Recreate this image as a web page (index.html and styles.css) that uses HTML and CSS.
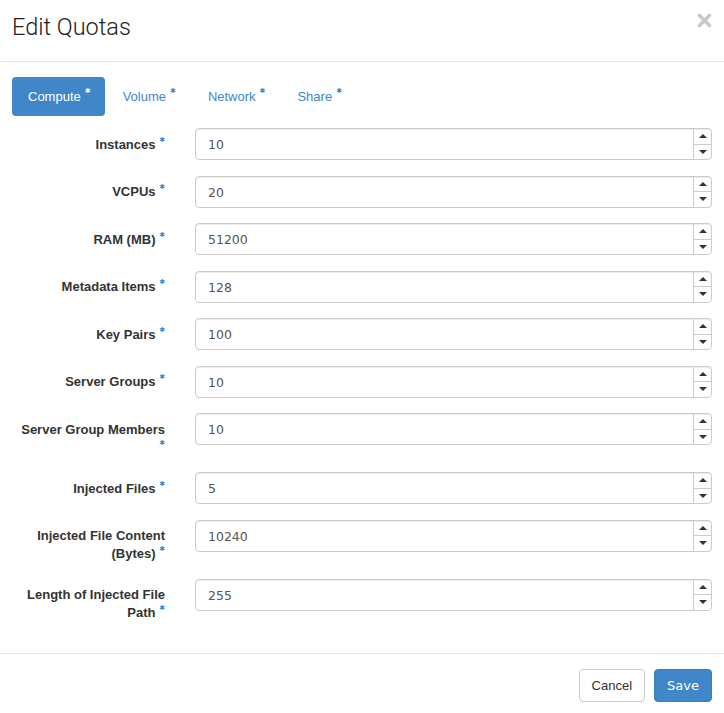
FILE: index.html
```html
<!DOCTYPE html>
<html>
<head>
<meta charset="utf-8">
<link rel="stylesheet" href="styles.css">
</head>
<body>
<div class="modal">
  <div class="modal-header">
    <h3 class="title">Edit Quotas</h3>
    <svg class="close" width="15" height="15" viewBox="0 0 15 15"><path d="M2.5 2.5 L12.5 12.5 M12.5 2.5 L2.5 12.5" stroke="#c9c9c9" stroke-width="3.6" stroke-linecap="round"/></svg>
  </div>
  <div class="modal-body">
    <ul class="tabs">
      <li class="tab active">Compute</li>
      <li class="tab">Volume</li>
      <li class="tab">Network</li>
      <li class="tab">Share</li>
    </ul>
    <form class="form">
      <div class="row"><label class="lbl">Instances <span class="req">&#x2731;</span></label><div class="num"><span class="val">10</span><span class="spin"><span class="up"></span><span class="down"></span></span></div></div>
      <div class="row"><label class="lbl">VCPUs <span class="req">&#x2731;</span></label><div class="num"><span class="val">20</span><span class="spin"><span class="up"></span><span class="down"></span></span></div></div>
      <div class="row"><label class="lbl">RAM (MB) <span class="req">&#x2731;</span></label><div class="num"><span class="val">51200</span><span class="spin"><span class="up"></span><span class="down"></span></span></div></div>
      <div class="row"><label class="lbl">Metadata Items <span class="req">&#x2731;</span></label><div class="num"><span class="val">128</span><span class="spin"><span class="up"></span><span class="down"></span></span></div></div>
      <div class="row"><label class="lbl">Key Pairs <span class="req">&#x2731;</span></label><div class="num"><span class="val">100</span><span class="spin"><span class="up"></span><span class="down"></span></span></div></div>
      <div class="row"><label class="lbl">Server Groups <span class="req">&#x2731;</span></label><div class="num"><span class="val">10</span><span class="spin"><span class="up"></span><span class="down"></span></span></div></div>
      <div class="row"><label class="lbl">Server Group Members <span class="req">&#x2731;</span></label><div class="num"><span class="val">10</span><span class="spin"><span class="up"></span><span class="down"></span></span></div></div>
      <div class="row"><label class="lbl">Injected Files <span class="req">&#x2731;</span></label><div class="num"><span class="val">5</span><span class="spin"><span class="up"></span><span class="down"></span></span></div></div>
      <div class="row"><label class="lbl">Injected File Content (Bytes) <span class="req">&#x2731;</span></label><div class="num"><span class="val">10240</span><span class="spin"><span class="up"></span><span class="down"></span></span></div></div>
      <div class="row"><label class="lbl">Length of Injected File Path <span class="req">&#x2731;</span></label><div class="num"><span class="val">255</span><span class="spin"><span class="up"></span><span class="down"></span></span></div></div>
    </form>
  </div>
  <div class="modal-footer">
    <button class="btn btn-default" type="button">Cancel</button>
    <button class="btn btn-primary" type="button">Save</button>
  </div>
</div>
</body>
</html>
```
FILE: styles.css
```css
* { box-sizing: border-box; }
html, body { margin: 0; padding: 0; background: #fff; }
body {
  font-family: "Liberation Sans", Arial, sans-serif;
  font-size: 13px;
  line-height: 1.428571;
  color: #333;
}
.modal { width: 724px; }
.modal-header {
  height: 62px;
  border-bottom: 1px solid #e5e5e5;
  padding: 15px 12px 0 12px;
  display: flex;
  justify-content: space-between;
  align-items: flex-start;
}
.title {
  margin: 0;
  font-family: Roboto, "Liberation Sans", sans-serif;
  font-size: 23.5px;
  font-weight: 300;
  line-height: 1.1;
  color: #222;
}
.close { margin-top: -2px; margin-right: 0; }
.modal-body { padding: 15px 12px 16px 12px; }
.tabs {
  list-style: none;
  margin: 0 0 12px 0;
  padding: 0;
  display: flex;
  gap: 2px;
}
.tab {
  padding: 10px 14px 10px 16px;
  line-height: 19px;
  border-radius: 4px;
  color: #3f87c9;
}
.tab::after {
  content: "\2731";
  font-family: "DejaVu Sans", sans-serif;
  font-size: 7px;
  line-height: 1;
  vertical-align: top;
  padding-left: 4px;
  color: #3f87c9;
  position: relative;
  top: 1px;
}
.req {
  font-family: "DejaVu Sans", sans-serif;
  font-weight: 400;
  font-size: 7px;
  line-height: 1;
  vertical-align: top;
  color: #3f87c9;
  position: relative;
  top: 1px;
}
.tab.active { background: #3f87c9; color: #fff; }
.tab.active::after { color: #fff; }
.form { display: flex; flex-direction: column; }
.row {
  display: flex;
  align-items: flex-start;
  margin-bottom: 15.5px;
}
.row:last-child { margin-bottom: 15px; }
.lbl {
  width: 153px;
  text-align: right;
  font-weight: 700;
  padding-top: 7.5px;
  line-height: 18px;
  margin-right: 30px;
}
.num {
  flex: 1;
  height: 32px;
  border: 1px solid #ccc;
  border-radius: 4px;
  display: flex;
  align-items: stretch;
  box-shadow: inset 0 1px 1px rgba(0,0,0,.075);
}
.val {
  flex: 1;
  padding: 0 12px;
  font-family: "DejaVu Sans", sans-serif;
  font-size: 12.5px;
  line-height: 31px;
  color: #555;
}
.spin {
  width: 18px;
  border-left: 1px solid #ccc;
  display: flex;
  flex-direction: column;
}
.up, .down {
  flex: 1;
  display: flex;
  align-items: center;
  justify-content: center;
}
.up { border-bottom: 1px solid #ccc; }
.up::before {
  content: "";
  border-left: 4px solid transparent;
  border-right: 4px solid transparent;
  border-bottom: 4px solid #333;
}
.down::before {
  content: "";
  border-left: 4px solid transparent;
  border-right: 4px solid transparent;
  border-top: 4px solid #333;
}
.modal-footer {
  border-top: 1px solid #e5e5e5;
  padding: 15px 12px 15px 12px;
  display: flex;
  justify-content: flex-end;
  gap: 9px;
}
.btn {
  font-family: "Liberation Sans", Arial, sans-serif;
  font-size: 13px;
  height: 33px;
  padding: 0 12px;
  border-radius: 4px;
  border: 1px solid #ccc;
  background: #fff;
  color: #333;
}
.btn-primary {
  background: #3f87c9;
  border-color: #3a7dbb;
  color: #fff;
  font-family: "DejaVu Sans", sans-serif;
  padding: 0 12px;
}
```
